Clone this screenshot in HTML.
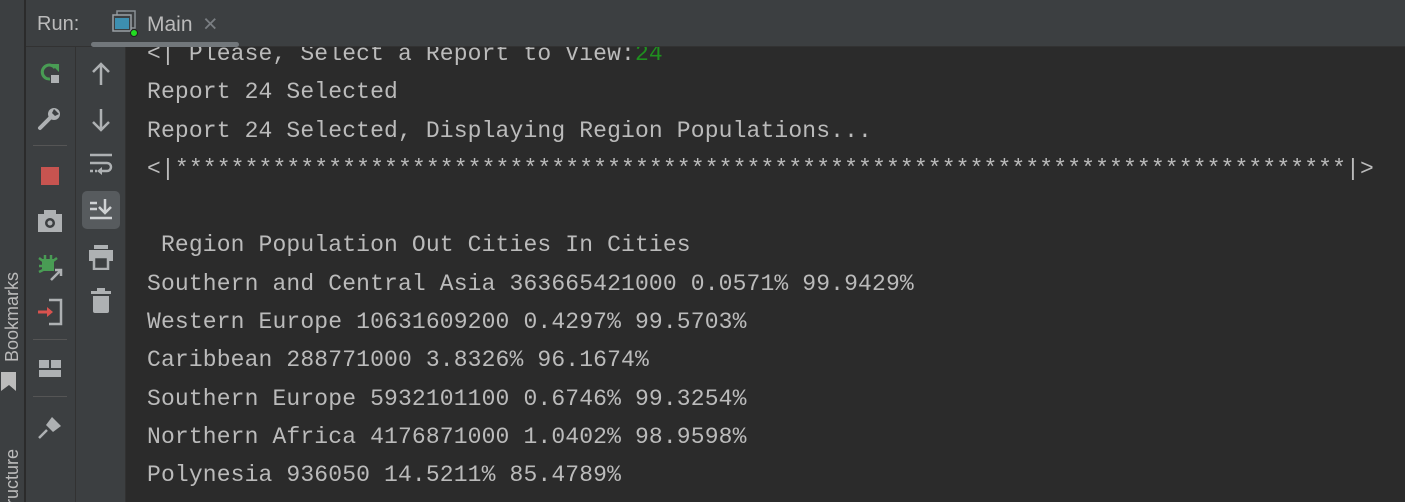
<!DOCTYPE html>
<html style="overflow:hidden"><head><meta charset="utf-8"><style>
*{margin:0;padding:0;box-sizing:border-box}
html,body{width:1405px;height:502px;overflow:hidden}
body{background:#2b2b2b;position:relative;font-family:"Liberation Sans",sans-serif}
.strip{position:absolute;left:0;top:0;width:25px;height:502px;background:#3c3f41;border-right:1px solid #2b2b2b;overflow:hidden}
.head{position:absolute;left:26px;top:0;right:0;height:47px;background:#3c3f41;border-bottom:1px solid #323232;z-index:5}
.tb1{position:absolute;left:26px;top:47px;width:50px;height:455px;background:#3c3f41;border-right:1px solid #323232}
.tb2{position:absolute;left:76px;top:47px;width:50px;height:455px;background:#3c3f41;border-right:1px solid #323232}
.con{position:absolute;left:147px;top:35px;font-family:"Liberation Mono",monospace;font-size:23px;letter-spacing:0.14px;color:#bbbbbb;line-height:38.3px;white-space:pre;z-index:1}
.ic{position:absolute}
.vt{position:absolute;color:#bbbbbb;font-size:18px;transform:rotate(-90deg);transform-origin:left top;white-space:nowrap}
</style></head><body>
<div class="strip">
<div class="vt" style="left:2px;top:362px">Bookmarks</div>
<svg class="ic" style="left:0;top:372px" width="18" height="20"><path d="M1 0h15v19l-7-6-8 6z" fill="#bbb"/></svg>
<div class="vt" style="left:2px;top:522px">Structure</div>
</div>
<div class="head">
<div style="position:absolute;left:11px;top:13px;color:#bbbbbb;font-size:20px">Run:</div>
<svg class="ic" style="left:86px;top:10px" width="26" height="28"><rect x="5" y="1" width="18" height="17" fill="none" stroke="#8a9096" stroke-width="1.5"/><rect x="1" y="5" width="18" height="16" fill="#3c3f41" stroke="#9aa0a6" stroke-width="1.5"/><rect x="3" y="8" width="14" height="11" fill="#3d8fb0"/><circle cx="22" cy="23" r="3.5" fill="#22dd22" stroke="#222" stroke-width="1"/></svg>
<div style="position:absolute;left:121px;top:13px;color:#bbbbbb;font-size:21px">Main</div>
<div style="position:absolute;left:177px;top:10px;color:#7a7e82;font-size:25px">×</div>
<div style="position:absolute;left:65px;top:42px;width:148px;height:5px;border-radius:3px;background:#72777b"></div>
</div>
<div class="tb1"></div><div class="tb2"></div>
<svg class="ic" style="left:37px;top:60px" width="26" height="26"><path d="M13 19a7 7 0 1 1 5-11" fill="none" stroke="#499c54" stroke-width="3"/><path d="M14 4h8v8z" fill="#499c54"/><rect x="14" y="15" width="8" height="8" fill="#aeb1b3"/></svg>
<svg class="ic" style="left:37px;top:106px" width="26" height="26"><path d="M3 22l10-10" stroke="#aeb1b3" stroke-width="4" stroke-linecap="round"/><circle cx="17" cy="8" r="6" fill="#aeb1b3"/><path d="M17 3l5 5-4 2-3-3z" fill="#3c3f41"/></svg>
<div style="position:absolute;left:33px;top:145px;width:34px;height:1px;background:#555"></div>
<div style="position:absolute;left:41px;top:167px;width:18px;height:18px;background:#c75450"></div>
<svg class="ic" style="left:37px;top:209px" width="26" height="24"><rect x="1" y="5" width="24" height="18" fill="#aeb1b3"/><rect x="7" y="1" width="12" height="5" fill="#aeb1b3"/><circle cx="13" cy="14" r="5" fill="#3c3f41"/><circle cx="13" cy="14" r="2.5" fill="#aeb1b3"/></svg>
<svg class="ic" style="left:37px;top:254px" width="28" height="28"><path d="M5 5h12v12H5z" fill="#499c54"/><path d="M2 4l4 3M20 4l-4 3M2 12h4M2 18l4-2M14 1v5M8 1v5" stroke="#499c54" stroke-width="2.5"/><path d="M14 26l10-10M18 16h6v6" stroke="#aeb1b3" stroke-width="2.5" fill="none"/></svg>
<svg class="ic" style="left:36px;top:298px" width="28" height="28"><path d="M13 2h12v24H13" fill="none" stroke="#aeb1b3" stroke-width="2.5"/><path d="M2 14h13" stroke="#d9534f" stroke-width="3"/><path d="M11 9l6 5-6 5z" fill="#d9534f"/></svg>
<div style="position:absolute;left:33px;top:339px;width:34px;height:1px;background:#555"></div>
<svg class="ic" style="left:39px;top:359px" width="24" height="20"><rect x="0" y="1" width="10" height="8" fill="#aeb1b3"/><rect x="12" y="1" width="10" height="8" fill="#aeb1b3"/><rect x="0" y="11" width="22" height="7" fill="#aeb1b3"/></svg>
<div style="position:absolute;left:33px;top:396px;width:34px;height:1px;background:#555"></div>
<svg class="ic" style="left:37px;top:414px" width="26" height="26"><path d="M2 24l8-8" stroke="#aeb1b3" stroke-width="2.5"/><path d="M9 11l6-8 9 9-8 6z" fill="#aeb1b3"/></svg>
<svg class="ic" style="left:88px;top:61px" width="26" height="26"><path d="M13 3v21M5 11l8-8 8 8" fill="none" stroke="#aeb1b3" stroke-width="2.5"/></svg>
<svg class="ic" style="left:88px;top:107px" width="26" height="26"><path d="M13 2v21M5 15l8 8 8-8" fill="none" stroke="#aeb1b3" stroke-width="2.5"/></svg>
<svg class="ic" style="left:88px;top:152px" width="26" height="24"><path d="M2 3h22M2 11h17a4 4 0 0 1 0 8h-7M2 19h3M7 19h2" fill="none" stroke="#aeb1b3" stroke-width="2.5"/><path d="M14 15v8l-5-4z" fill="#aeb1b3"/></svg>
<div style="position:absolute;left:82px;top:191px;width:38px;height:38px;border-radius:5px;background:#575b5e"></div>
<svg class="ic" style="left:88px;top:197px" width="26" height="26"><path d="M2 6h7M2 12h7M2 21h22M17 2v14M11 10l6 6 6-6" fill="none" stroke="#cfd2d4" stroke-width="2.5"/></svg>
<svg class="ic" style="left:88px;top:244px" width="26" height="26"><rect x="6" y="1" width="14" height="4" fill="#aeb1b3"/><rect x="1" y="6" width="24" height="11" fill="#aeb1b3"/><rect x="6" y="13" width="14" height="12" fill="#3c3f41" stroke="#aeb1b3" stroke-width="2.5"/></svg>
<svg class="ic" style="left:90px;top:288px" width="22" height="26"><rect x="1" y="3" width="20" height="3" fill="#aeb1b3"/><rect x="7" y="0" width="8" height="3" fill="#aeb1b3"/><path d="M3 8h16v15a2 2 0 0 1-2 2H5a2 2 0 0 1-2-2z" fill="#aeb1b3"/></svg>
<div class="con">&lt;| Please, Select a Report to View:<span style="color:#1f8f1f">24</span>
Report 24 Selected
Report 24 Selected, Displaying Region Populations...
&lt;|************************************************************************************|&gt;

 Region Population Out Cities In Cities
Southern and Central Asia 363665421000 0.0571% 99.9429%
Western Europe 10631609200 0.4297% 99.5703%
Caribbean 288771000 3.8326% 96.1674%
Southern Europe 5932101100 0.6746% 99.3254%
Northern Africa 4176871000 1.0402% 98.9598%
Polynesia 936050 14.5211% 85.4789%</div>
</body></html>
